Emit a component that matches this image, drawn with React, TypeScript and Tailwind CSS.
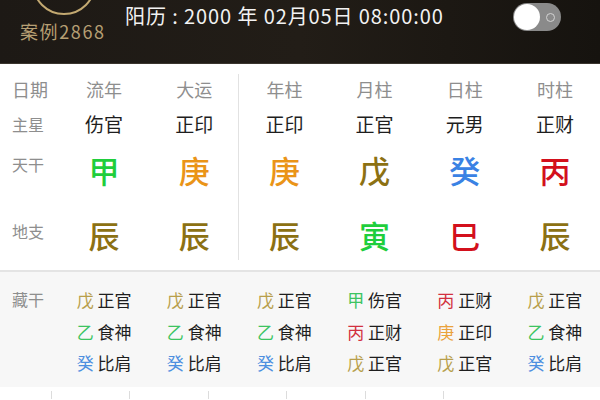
const FONT = { fontFamily: '"Noto Sans CJK SC", "Noto Sans", sans-serif' };

type Cell = { ch: string; color: string };

const columns = ["流年", "大运", "年柱", "月柱", "日柱", "时柱"];
const stars = ["伤官", "正印", "正印", "正官", "元男", "正财"];

const GREEN = "text-[#1fce3c]";
const ORANGE = "text-[#ea9418]";
const OLIVE = "text-[#8c7113]";
const BLUE = "text-[#3a82e4]";
const RED = "text-[#d3101c]";

const stems: Cell[] = [
	{ ch: "甲", color: GREEN },
	{ ch: "庚", color: ORANGE },
	{ ch: "庚", color: ORANGE },
	{ ch: "戊", color: OLIVE },
	{ ch: "癸", color: BLUE },
	{ ch: "丙", color: RED },
];

const branches: Cell[] = [
	{ ch: "辰", color: OLIVE },
	{ ch: "辰", color: OLIVE },
	{ ch: "辰", color: OLIVE },
	{ ch: "寅", color: GREEN },
	{ ch: "巳", color: RED },
	{ ch: "辰", color: OLIVE },
];

const H_OLIVE = "text-[#b89f4c]";
const H_GREEN = "text-[#3cc462]";
const H_BLUE = "text-[#4d8fe0]";
const H_RED = "text-[#d23040]";
const H_ORANGE = "text-[#eaa23c]";

const wuChen = [
	{ ch: "戊", color: H_OLIVE, name: "正官" },
	{ ch: "乙", color: H_GREEN, name: "食神" },
	{ ch: "癸", color: H_BLUE, name: "比肩" },
];

const hidden = [
	wuChen,
	wuChen,
	wuChen,
	[
		{ ch: "甲", color: H_GREEN, name: "伤官" },
		{ ch: "丙", color: H_RED, name: "正财" },
		{ ch: "戊", color: H_OLIVE, name: "正官" },
	],
	[
		{ ch: "丙", color: H_RED, name: "正财" },
		{ ch: "庚", color: H_ORANGE, name: "正印" },
		{ ch: "戊", color: H_OLIVE, name: "正官" },
	],
	wuChen,
];

const Header = () => (
	<div className="relative h-[64px] overflow-hidden bg-gradient-to-r from-[#1d1915] via-[#221d17] to-[#16130f] border-b border-[#3a352e]">
		<div className="absolute left-[32px] top-[-49px] w-[64px] h-[64px] rounded-full border-2 border-[#c3a971]" />
		<div className="flex items-start h-full">
			<div className="w-[125px] pt-[21px] pl-[20px] text-[18px] leading-[20px] tracking-[1.6px] text-[#b69f73]">
				案例2868
			</div>
			<div className="flex-1 pt-[5px] text-[20px] leading-[22px] text-[#f2f2f2] tracking-[0.9px]">
				阳历 : 2000 年 02月05日 08:00:00
			</div>
			<div className="mr-[39px] mt-[3px] w-[48px] h-[28px] rounded-full bg-[#8a8a8a] flex items-center px-[1px]">
				<div className="w-[26px] h-[26px] rounded-full bg-white" />
				<div className="ml-[6px] w-[9px] h-[9px] rounded-full border-[1.5px] border-[#d4d4d4]" />
			</div>
		</div>
	</div>
);

const Row = ({
	label,
	labelClass,
	rowClass,
	children,
}: {
	label: string;
	labelClass: string;
	rowClass: string;
	children: (i: number) => React.ReactNode;
}) => (
	<div className={`grid grid-cols-[59px_repeat(6,1fr)] ${rowClass}`}>
		<div className={`pl-[12px] text-[#8e8e8e] ${labelClass}`}>{label}</div>
		{columns.map((_, i) => (
			<div
				key={i}
				className={`flex justify-center ${i === 2 ? "border-l border-[#e2e2e2] -ml-[1px]" : ""}`}
			>
				{children(i)}
			</div>
		))}
	</div>
);

const App = () => {
	return (
		<div className="w-[600px] h-[400px] overflow-hidden bg-white" style={FONT}>
			<Header />

			<div className="pt-[10px] pb-[10px]">
				<Row label="日期" labelClass="text-[18px] leading-[30px]" rowClass="h-[30px]">
					{(i) => (
						<span className="text-[18px] leading-[30px] text-[#8e8e8e]">{columns[i]}</span>
					)}
				</Row>
				<Row label="主星" labelClass="text-[16px] leading-[40px]" rowClass="h-[40px]">
					{(i) => (
						<span className="text-[19px] leading-[40px] text-[#1e1e1e]">{stars[i]}</span>
					)}
				</Row>
				<Row label="天干" labelClass="text-[16px] leading-none pt-[12px]" rowClass="h-[60px]">
					{(i) => (
						<span className={`text-[31px] font-medium leading-none pt-[10px] ${stems[i].color}`}>
							{stems[i].ch}
						</span>
					)}
				</Row>
				<Row label="地支" labelClass="text-[16px] leading-none pt-[19px]" rowClass="h-[56px]">
					{(i) => (
						<span className={`text-[31px] font-medium leading-none pt-[15px] ${branches[i].color}`}>
							{branches[i].ch}
						</span>
					)}
				</Row>
			</div>

			<div className="border-t-2 border-[#e4e4e4] bg-[#f7f7f7] h-[117px] pt-[12px]">
				<div className="grid grid-cols-[59px_repeat(6,1fr)]">
					<div className="pl-[12px] text-[16px] leading-[31px] text-[#8e8e8e]">藏干</div>
					{hidden.map((col, i) => (
						<div key={i} className="flex flex-col items-center">
							{col.map((h, j) => (
								<div key={j} className="text-[17px] leading-[31.5px] text-[#1e1e1e]">
									<span className={h.color}>{h.ch}</span> {h.name}
								</div>
							))}
						</div>
					))}
				</div>
			</div>

			<div className="grid grid-cols-[51px_repeat(7,1fr)] h-[12px] pt-[4px] bg-white">
				{Array.from({ length: 8 }).map((_, i) => (
					<div key={i} className={i > 0 && i < 7 ? "border-l border-[#dcdcdc]" : ""} />
				))}
			</div>
		</div>
	);
};

export default App;
